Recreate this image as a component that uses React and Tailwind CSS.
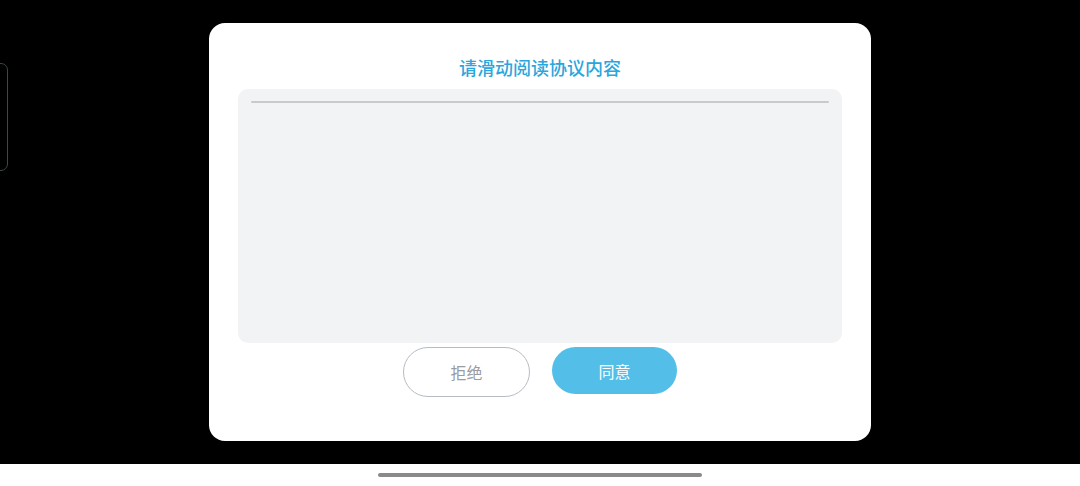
import React from "react";

function AgreementDialog() {
  return (
    <div className="w-[662px] h-[418px] bg-white rounded-[16px] flex flex-col items-center">
      <h2 className="mt-[32px] h-[24px] leading-[24px] text-[18px] font-medium text-[#2ba6dc]">
        请滑动阅读协议内容
      </h2>
      <div className="mt-[10px] w-[604px] h-[254px] bg-[#f2f3f5] rounded-[10px] px-[13px] pt-[12px]">
        <div className="h-[2px] bg-[#c9cacd] rounded-full" />
      </div>
      <div className="mt-[4px] flex items-start gap-[22px]">
        <button className="w-[127px] h-[50px] rounded-full border border-[#b5bcc6] bg-white text-[16px] text-[#9a9ca3]">
          拒绝
        </button>
        <button className="w-[125px] h-[47px] rounded-full bg-[#53bfe9] text-[16px] text-white">
          同意
        </button>
      </div>
    </div>
  );
}

export default function App() {
  return (
    <div
      className="w-[1080px] h-[486px] flex flex-col bg-white"
      style={{ fontFamily: '"Noto Sans CJK SC", "Noto Sans", sans-serif' }}
    >
      <div className="relative h-[464px] bg-black pt-[23px] pl-[209px]">
        <div className="absolute left-[-12px] top-[63px] w-[20px] h-[108px] rounded-[7px] border border-[#3b4a3c]" />
        <AgreementDialog />
      </div>
      <div className="flex-1 flex justify-center pt-[9px]">
        <div className="w-[324px] h-[4px] rounded-full bg-[#8a8a8a]" />
      </div>
    </div>
  );
}
